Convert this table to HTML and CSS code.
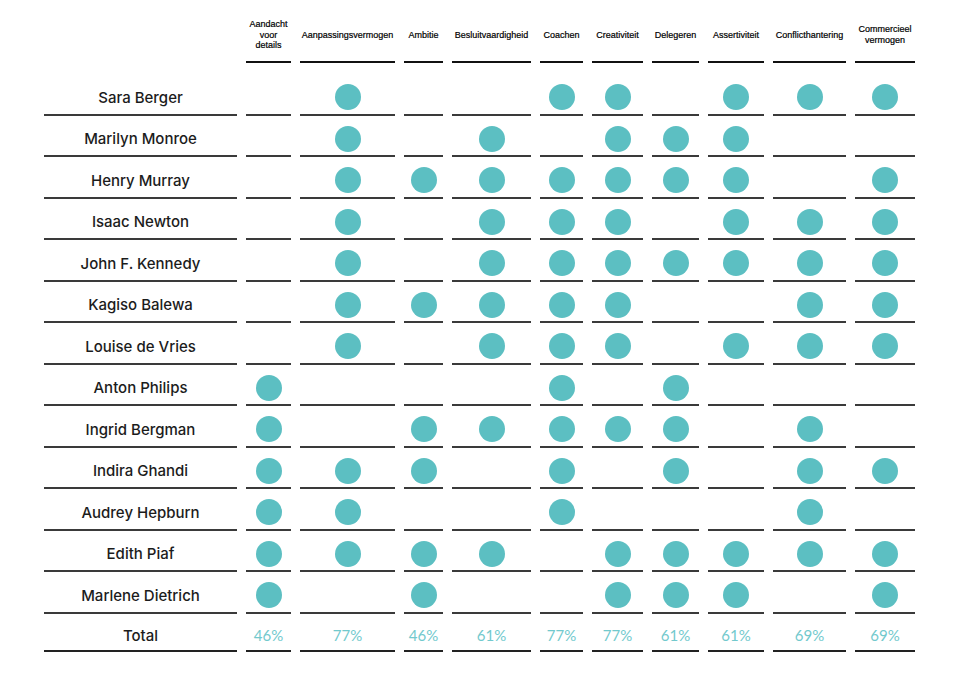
FILE: index.html
```html
<!DOCTYPE html>
<html lang="nl">
<head>
<meta charset="utf-8">
<title>Competenties</title>
<link rel="stylesheet" href="styles.css">
</head>
<body>
<div class="matrix">
  <div class="row head">
    <div class="hcell blank"></div>
    <div class="hcell">Aandacht<br>voor<br>details</div>
    <div class="hcell">Aanpassingsvermogen</div>
    <div class="hcell">Ambitie</div>
    <div class="hcell">Besluitvaardigheid</div>
    <div class="hcell">Coachen</div>
    <div class="hcell">Creativiteit</div>
    <div class="hcell">Delegeren</div>
    <div class="hcell">Assertiviteit</div>
    <div class="hcell">Conflicthantering</div>
    <div class="hcell">Commercieel<br>vermogen</div>
  </div>
  <div class="body" id="body"></div>
  <div class="row total">
    <div class="cell name">Total</div>
    <div class="cell pct">46%</div>
    <div class="cell pct">77%</div>
    <div class="cell pct">46%</div>
    <div class="cell pct">61%</div>
    <div class="cell pct">77%</div>
    <div class="cell pct">77%</div>
    <div class="cell pct">61%</div>
    <div class="cell pct">61%</div>
    <div class="cell pct">69%</div>
    <div class="cell pct">69%</div>
  </div>
</div>
<script src="app.js"></script>
</body>
</html>
```
FILE: app.js
```js
var people = [
  ["Sara Berger",      [2,5,6,8,9,10]],
  ["Marilyn Monroe",   [2,4,6,7,8]],
  ["Henry Murray",     [2,3,4,5,6,7,8,10]],
  ["Isaac Newton",     [2,4,5,6,8,9,10]],
  ["John F. Kennedy",  [2,4,5,6,7,8,9,10]],
  ["Kagiso Balewa",    [2,3,4,5,6,9,10]],
  ["Louise de Vries",  [2,4,5,6,8,9,10]],
  ["Anton Philips",    [1,5,7]],
  ["Ingrid Bergman",   [1,3,4,5,6,7,9]],
  ["Indira Ghandi",    [1,2,3,5,7,9,10]],
  ["Audrey Hepburn",   [1,2,5,9]],
  ["Edith Piaf",       [1,2,3,4,6,7,8,9,10]],
  ["Marlene Dietrich", [1,3,6,7,8,10]]
];
var body = document.getElementById("body");
people.forEach(function (p) {
  var row = document.createElement("div");
  row.className = "row";
  var n = document.createElement("div");
  n.className = "cell name";
  n.textContent = p[0];
  row.appendChild(n);
  for (var c = 1; c <= 10; c++) {
    var cell = document.createElement("div");
    cell.className = "cell";
    if (p[1].indexOf(c) !== -1) {
      var d = document.createElement("span");
      d.className = "dot";
      cell.appendChild(d);
    }
    row.appendChild(cell);
  }
  body.appendChild(row);
});
```
FILE: styles.css
```css
html, body {
  margin: 0;
  padding: 0;
  background: #ffffff;
}

.matrix {
  padding: 8px 0 0 44px;
}

.row {
  display: grid;
  grid-template-columns: 193px 45px 95px 39px 79px 43px 51px 47px 56px 73px 60px;
  column-gap: 9px;
}

.head {
  height: 55px;
  margin-bottom: 11px;
}

.hcell {
  display: flex;
  align-items: center;
  justify-content: center;
  padding-top: 1px;
  text-align: center;
  font-family: "Liberation Sans", Arial, sans-serif;
  font-size: 9px;
  line-height: 10.8px;
  color: #000000;
  -webkit-text-stroke: 0.2px #000000;
  border-bottom: 2.5px solid #111111;
}

.hcell.blank {
  border-bottom: none;
}

.body .row {
  height: 41.5px;
}

.cell {
  box-sizing: border-box;
  display: flex;
  align-items: center;
  justify-content: center;
  padding-top: 7px;
  border-bottom: 2px solid #3a3a3a;
}

.name {
  font-family: "Inter", "Noto Sans", sans-serif;
  font-weight: 500;
  font-size: 15px;
  color: #1c1c1c;
}

.dot {
  width: 26px;
  height: 26px;
  border-radius: 50%;
  background: #5cbfc2;
}

.total {
  height: 38.5px;
}

.total .cell {
  border-bottom-color: #222222;
}

.pct {
  font-family: "Lato", "Liberation Sans", sans-serif;
  font-size: 15px;
  color: #72c9cd;
}
```
